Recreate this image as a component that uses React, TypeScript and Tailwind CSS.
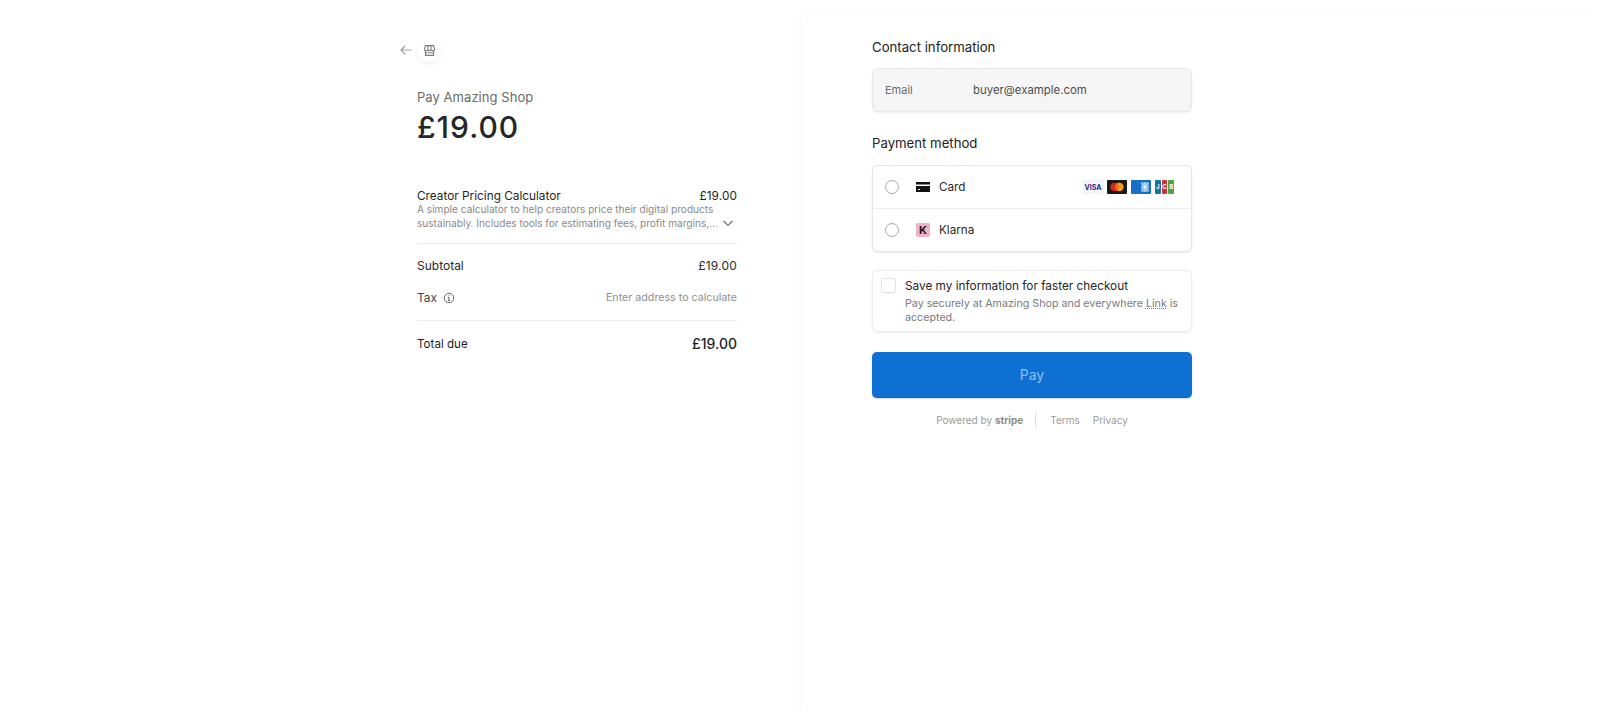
const VisaIcon = () => (
  <div className="w-[20px] h-[14px] bg-[#f6f7fb] border border-[#eeeef4] rounded-[1px] flex items-center justify-center">
    <span className="text-[7px] font-bold text-[#2a2a8c] leading-none">VISA</span>
  </div>
);

const McIcon = () => (
  <svg width="20" height="14" viewBox="0 0 20 14">
    <rect width="20" height="14" rx="1" fill="#1c1a17" />
    <circle cx="7.6" cy="7" r="4.3" fill="#d9261c" />
    <circle cx="12.4" cy="7" r="4.3" fill="#f49b1c" />
    <path d="M10 3.4a4.3 4.3 0 0 1 0 7.2a4.3 4.3 0 0 1 0-7.2z" fill="#f26a1b" />
  </svg>
);

const AmexIcon = () => (
  <svg width="20" height="14" viewBox="0 0 20 14">
    <rect width="20" height="14" rx="1" fill="#1670c9" />
    <rect x="10" y="2" width="8" height="10" fill="#6ea7dd" />
    <path d="M11 3l6 8M17 3l-6 8M14 2v10M10.500 7h7" stroke="#ffffff" strokeWidth="0.8" />
  </svg>
);

const JcbIcon = () => (
  <div className="w-[19px] h-[14px] flex gap-[1px]">
    <div className="flex-1 rounded-[1px] bg-[#1a72a8] flex items-center justify-center text-[6px] font-bold text-white leading-none">J</div>
    <div className="flex-1 rounded-[1px] bg-[#d62d39] flex items-center justify-center text-[6px] font-bold text-white leading-none">C</div>
    <div className="flex-1 rounded-[1px] bg-[#45a846] flex items-center justify-center text-[6px] font-bold text-white leading-none">B</div>
  </div>
);

const Radio = () => (
  <div className="w-[14px] h-[14px] rounded-full border border-[#a8a8a8] bg-white" />
);

const App = () => {
  return (
    <div className="flex min-h-[716px] bg-white font-['Inter',sans-serif] text-[#1a1a1a]">
      {/* Summary column */}
      <div className="w-[802px] flex justify-end pr-[65px]">
        <div className="w-[320px] relative pt-[87px]">
          <div className="absolute left-[-18px] top-[38px] flex items-center">
            <svg width="14" height="14" viewBox="0 0 14 14" fill="none" stroke="#a3a3a3" strokeWidth="1.2" strokeLinecap="round" strokeLinejoin="round">
              <path d="M12 7H2M6 3L2 7l4 4" />
            </svg>
            <div className="ml-[4px] w-[24px] h-[24px] rounded-full bg-white shadow-[0_2px_5px_rgba(0,0,0,0.06)] flex items-center justify-center">
              <svg width="13" height="13" viewBox="0 0 12 12" fill="none" stroke="#7a7a7a" strokeWidth="1">
                <path d="M2.200 1.500h7.600l.9 3.800a1 1 0 0 1-1 .7H2.300a1 1 0 0 1-1-.7zM2.200 6v4.500h7.600V6M2.200 8h7.600M4.600 1.500V6M7.400 1.500V6" />
              </svg>
            </div>
          </div>

          <div className="text-[13px] leading-[20px] tracking-[0.05px] text-[#6a6a6a]">Pay Amazing Shop</div>
          <div className="text-[30px] leading-[36px] font-medium tracking-[1px] text-[#262626] mt-[2px]">£19.00</div>

          <div className="mt-[43px] flex justify-between text-[11.8px] leading-[16px] text-[#1f1f1f]">
            <span>Creator Pricing Calculator</span>
            <span className="tracking-[0.1px]">£19.00</span>
          </div>
          <div className="-mt-[2px] flex items-end justify-between pb-[13px] border-b border-[#ececec] shadow-[0_1px_1px_rgba(0,0,0,0.02)] text-[10.1px] leading-[14px] text-[#8a8a8a]">
            <div className="whitespace-nowrap">
              <div>A simple calculator to help creators price their digital products</div>
              <div>sustainably. Includes tools for estimating fees, profit margins,...</div>
            </div>
            <svg width="12" height="12" viewBox="0 0 12 12" fill="none" stroke="#6f6f6f" strokeWidth="1.1" className="mr-[3px] mb-[1px]">
              <path d="M1.500 4l4.500 4.500L10.500 4" />
            </svg>
          </div>

          <div className="mt-[14px] flex justify-between text-[12px] leading-[16px] text-[#2a2a2a]">
            <span>Subtotal</span>
            <span className="tracking-[0.2px]">£19.00</span>
          </div>
          <div className="mt-[16px] pb-[14px] border-b border-[#eeeeee] flex justify-between text-[12px] leading-[16px]">
            <span className="flex items-center gap-[6px] text-[#444444]">
              Tax
              <svg width="12" height="12" viewBox="0 0 12 12" fill="none" stroke="#555555" strokeWidth="0.9">
                <circle cx="6" cy="6" r="4.700" />
                <path d="M4.800 5.400H6v3M4.800 8.400h2.400M6 3.200v.9" />
              </svg>
            </span>
            <span className="text-[10.7px] text-[#8f8f8f]">Enter address to calculate</span>
          </div>
          <div className="mt-[13px] flex items-center justify-between text-[#1f1f1f]">
            <span className="text-[11.6px] leading-[20px]">Total due</span>
            <span className="text-[14px] leading-[20px] font-medium">£19.00</span>
          </div>
        </div>
      </div>

      {/* Payment column */}
      <div className="flex-1 mt-[14px] pl-[70px] pt-[23px] shadow-[-3px_0_10px_rgba(0,0,0,0.018)]">
        <div className="w-[320px]">
          <h2 className="text-[13.2px] leading-[20px] font-normal text-[#222222]">Contact information</h2>
          <div className="mt-[11px] h-[44px] rounded-[6px] bg-[#f6f6f6] border border-[#e9e9e9] shadow-[0_1px_2px_rgba(0,0,0,0.08)] flex items-center pl-[12px] pt-[1px] text-[#4d4d4d]">
            <span className="w-[88px] text-[11px] text-[#6d6d6d]">Email</span>
            <span className="text-[11.4px]">buyer@example.com</span>
          </div>

          <h2 className="mt-[21px] text-[13.2px] leading-[20px] font-normal text-[#222222]">Payment method</h2>
          <div className="mt-[12px] rounded-[6px] bg-white border border-[#e6e6e6] shadow-[0_1px_2px_rgba(0,0,0,0.08)]">
            <div className="h-[43px] border-b border-[#eeeeee] flex items-center pl-[12px] pr-[17px]">
              <Radio />
              <svg width="14" height="10" viewBox="0 0 14 10" className="ml-[17px]">
                <path d="M0 0h14v2.500H0zM0 4h14v6H0z" fill="#111111" />
                <rect x="2" y="7" width="2" height="1" fill="#ffffff" />
              </svg>
              <span className="ml-[9px] pt-[1px] text-[11.7px] text-[#2a2a2a]">Card</span>
              <div className="ml-auto flex items-center gap-[4px]">
                <VisaIcon />
                <McIcon />
                <AmexIcon />
                <JcbIcon />
              </div>
            </div>
            <div className="h-[42px] flex items-center pl-[12px]">
              <Radio />
              <div className="ml-[17px] w-[14px] h-[14px] rounded-[2px] bg-[#f3b0cb] flex items-center justify-center text-[11px] font-bold leading-none text-[#1a1a1a]">K</div>
              <span className="ml-[9px] pt-[1px] text-[11.7px] text-[#2a2a2a]">Klarna</span>
            </div>
          </div>

          <div className="mt-[18px] h-[62px] rounded-[6px] bg-white border border-[#ececec] shadow-[0_1px_2px_rgba(0,0,0,0.08)] flex pl-[8px] pt-[7px]">
            <div className="w-[15px] h-[15px] rounded-[3px] border border-[#e2e2e2] bg-white shadow-[0_1px_1px_rgba(0,0,0,0.05)]" />
            <div className="ml-[9px] w-[286px]">
              <div className="text-[11.8px] leading-[16px] text-[#262626]">Save my information for faster checkout</div>
              <div className="mt-[3px] text-[10.7px] leading-[14px] text-[#7a7a7a]">
                <div className="flex gap-[3px] whitespace-nowrap">
                  <span>Pay securely at Amazing Shop and everywhere</span>
                  <span className="underline decoration-dotted">Link</span>
                  <span>is</span>
                </div>
                <div>accepted.</div>
              </div>
            </div>
          </div>

          <button className="mt-[20px] w-full h-[46px] rounded-[5px] bg-[#0f70d4] border-b border-[#0d62ba] shadow-[0_1px_2px_rgba(0,0,0,0.15)] text-[14px] text-[#8cc0f2]">
            Pay
          </button>

          <div className="mt-[14px] flex items-center justify-center text-[10px] leading-[16px] text-[#9a9a9a]">
            <span>Powered by <span className="font-bold text-[#8d8d8d]">stripe</span></span>
            <div className="ml-[12px] mr-[14px] w-px h-[14px] bg-[#dddddd]" />
            <span>Terms</span>
            <span className="ml-[13px]">Privacy</span>
          </div>
        </div>
      </div>
    </div>
  );
};

export default App;
